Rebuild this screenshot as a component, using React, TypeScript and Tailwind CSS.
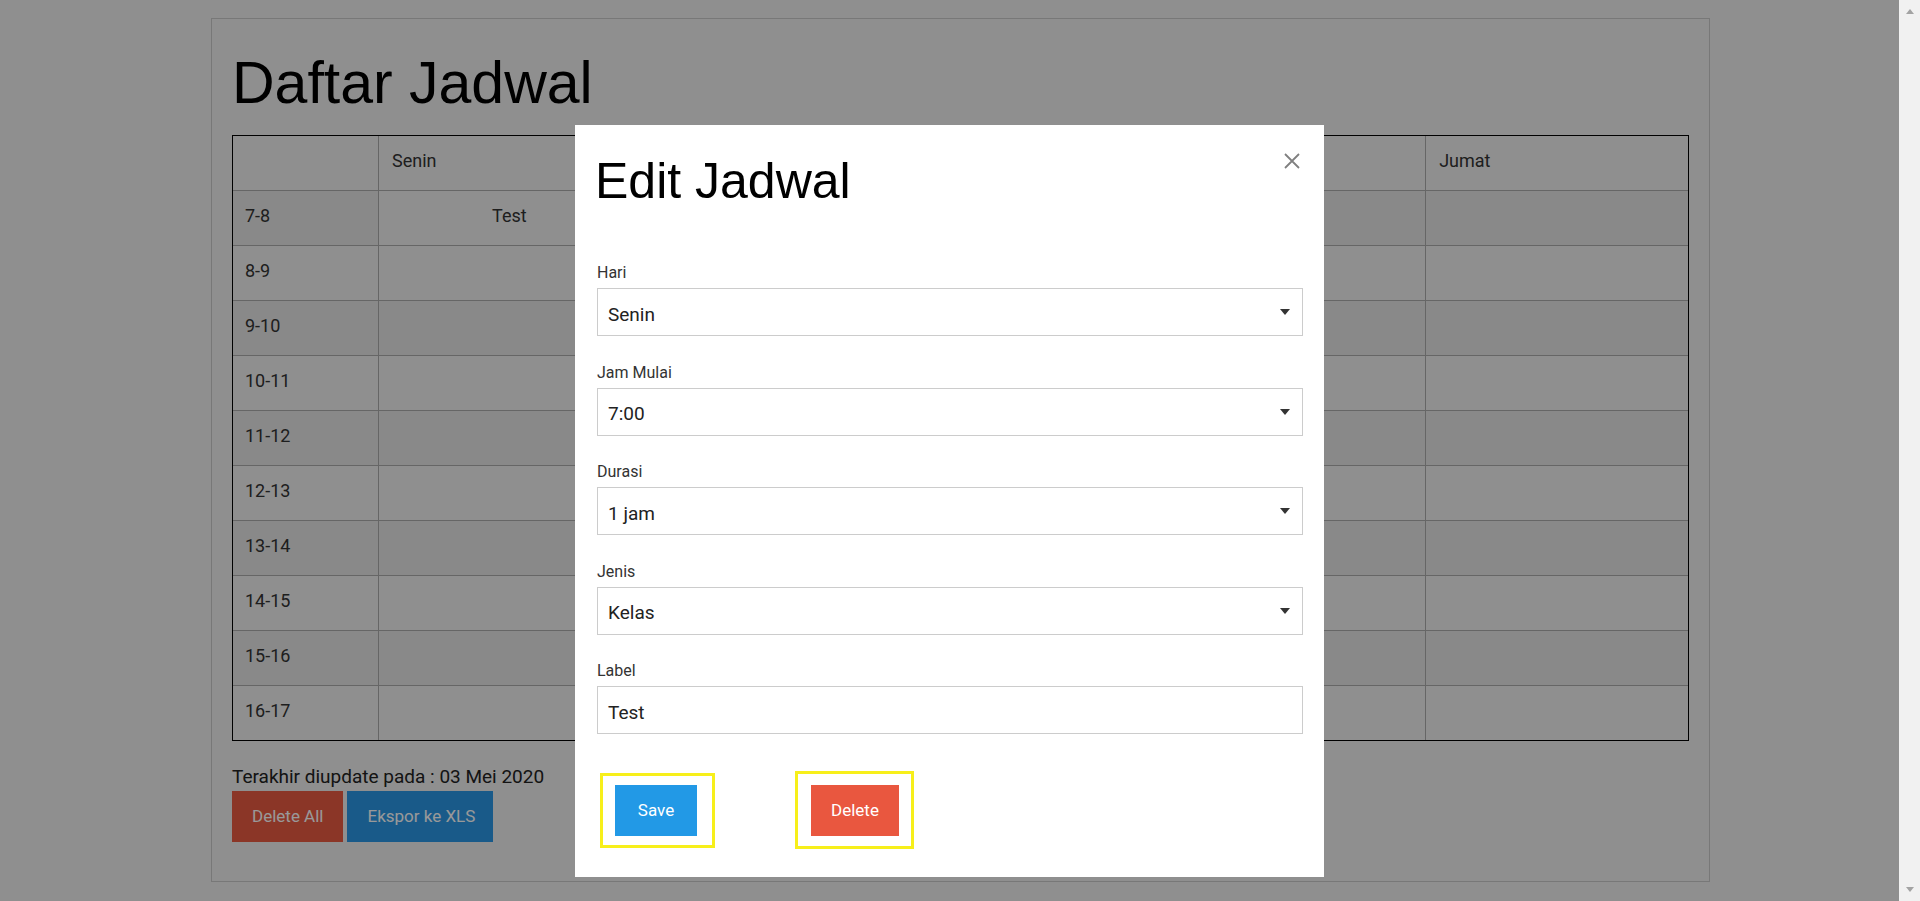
import React from "react";

const hours = ["7-8", "8-9", "9-10", "10-11", "11-12", "12-13", "13-14", "14-15", "15-16", "16-17"];
const days = ["Senin", "Selasa", "Rabu", "Kamis", "Jumat"];

const body = "font-['Roboto','Noto_Sans',sans-serif]";

function Field({ label, value, select = true }: { label: string; value: string; select?: boolean }) {
  return (
    <div className="flex flex-col">
      <div className="text-[16px] leading-[19px] text-[#333]">{label}</div>
      <div className="mt-[6px] flex h-[48px] items-center justify-between border border-[#cccccc] bg-white pl-[10px] pr-[11px]">
        <span className="pt-[5px] text-[19px] leading-[24px] text-[#222]">{value}</span>
        {select && (
          <svg width="10" height="6" viewBox="0 0 10 6" className="mr-[1px]">
            <path d="M0 0 L10 0 L5 6 Z" fill="#333" />
          </svg>
        )}
      </div>
    </div>
  );
}

export default function App() {
  return (
    <div className={`flex h-[901px] w-[1920px] overflow-hidden ${body}`}>
      <div className="relative flex-1 bg-[#eeeeee]">
        <div className="ml-[211px] mt-[18px] w-[1499px] border border-[#c8c8c8] px-5 pb-[39px] pt-[30px]">
          <h1 className="font-['Liberation_Sans','Arial',sans-serif] text-[59px] leading-[68px] text-black">Daftar Jadwal</h1>
          <div className="mt-[18px] grid grid-cols-[146px_repeat(5,minmax(0,1fr))] border border-black text-[18px] text-[#333]">
            <div className="h-[55px] border-b border-r border-[#aaaaaa]" />
            {days.map((d, i) => (
              <div
                key={d}
                className={`flex h-[55px] items-center border-b border-[#aaaaaa] pb-[5px] pl-[13px] ${i < 4 ? "border-r" : ""}`}
              >
                {d}
              </div>
            ))}
            {hours.map((h, r) => {
              const striped = r % 2 === 0;
              const last = r === hours.length - 1;
              const rowCls = `${last ? "h-[54px]" : "h-[55px] border-b"} border-[#aaaaaa] pb-[5px] ${striped ? "bg-[#e4e4e4]" : ""}`;
              return (
                <React.Fragment key={h}>
                  <div className={`flex items-center border-r pl-[12px] ${rowCls}`}>{h}</div>
                  {days.map((d, i) => {
                    const isTest = r === 0 && i === 0;
                    return (
                      <div
                        key={d}
                        className={`flex items-center justify-center ${i < 4 ? "border-r" : ""} ${rowCls} ${isTest ? "!bg-[#efefef]" : ""}`}
                      >
                        {isTest ? "Test" : ""}
                      </div>
                    );
                  })}
                </React.Fragment>
              );
            })}
          </div>
          <p className="mt-[25px] text-[19px] leading-[21px] text-[#222]">Terakhir diupdate pada : 03 Mei 2020</p>
          <div className="mt-[4px] flex gap-[4px]">
            <button className="h-[51px] bg-[#e85a42] px-5 text-[17px] text-white">Delete All</button>
            <button className="h-[51px] bg-[#2b97e5] pl-5 pr-[18px] text-[17px] text-white">Ekspor ke XLS</button>
          </div>
        </div>

        <div className="absolute inset-0 flex justify-center bg-black/40 pt-[125px]">
          <div className="relative h-[752px] w-[749px] bg-white pb-[28px] pl-[22px] pr-[21px] pt-[27px]">
            <svg width="16" height="16" viewBox="0 0 16 16" className="absolute right-[24px] top-[28px]">
              <path d="M1 1 L15 15 M15 1 L1 15" stroke="#808080" strokeWidth="1.8" />
            </svg>
            <h2 className="-ml-[2px] font-['Liberation_Sans','Arial',sans-serif] text-[50px] leading-[58px] text-black">Edit Jadwal</h2>
            <div className="mt-[53px] flex flex-col gap-[26.5px]">
              <Field label="Hari" value="Senin" />
              <Field label="Jam Mulai" value="7:00" />
              <Field label="Durasi" value="1 jam" />
              <Field label="Jenis" value="Kelas" />
              <Field label="Label" value="Test" select={false} />
            </div>
            <div className="ml-[3px] mt-[37px] flex items-center">
              <div className="flex h-[75px] w-[115px] items-center border-[3px] border-[#f7ef1a] pl-[12px]">
                <button className="h-[51px] w-[82px] bg-[#2299e6] pt-[2px] text-[17px] text-white">Save</button>
              </div>
              <div className="ml-[80px] flex h-[78px] w-[119px] items-center border-[3px] border-[#f7ef1a] pl-[13px]">
                <button className="h-[51px] w-[88px] bg-[#e9573f] pt-[2px] text-[17px] text-white">Delete</button>
              </div>
            </div>
          </div>
        </div>
      </div>
      <div className="flex w-[21px] flex-col items-center justify-between bg-[#f1f1f1] py-[9px]">
        <svg width="8" height="5" viewBox="0 0 8 5"><path d="M0 5 L4 0 L8 5 Z" fill="#a3a3a3" /></svg>
        <svg width="8" height="5" viewBox="0 0 8 5"><path d="M0 0 L8 0 L4 5 Z" fill="#a3a3a3" /></svg>
      </div>
    </div>
  );
}
